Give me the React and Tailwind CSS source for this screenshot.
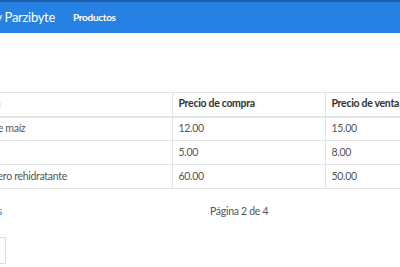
import React from "react";

const productos = [
  { descripcion: "Palomitas de maíz", compra: "12.00", venta: "15.00" },
  { descripcion: "Jabón", compra: "5.00", venta: "8.00" },
  { descripcion: "Polvo de suero rehidratante", compra: "60.00", venta: "50.00" },
];

export default function App() {
  return (
    <div className="min-h-screen w-[400px] overflow-hidden bg-white font-['Lato',sans-serif] text-[10.5px] tracking-[-0.3px] text-[#555]">
      <nav className="flex h-[33px] items-center border-t-2 border-[#1f5fa8] bg-[#2780e3] text-white">
        <div className="flex w-[55px] justify-end overflow-hidden whitespace-nowrap">
          <span className="text-[13px]">Sistema de ventas by Parzibyte</span>
        </div>
        <a className="ml-[18px] text-[10px] font-bold">Productos</a>
      </nav>

      <div className="-ml-[78px] pt-[59px]">
        <table className="w-[700px] table-fixed border-collapse">
          <thead>
            <tr className="h-[24px] border-y border-b-2 border-[#e3e3e3] text-left text-[#333]">
              <th className="w-[250px] border-r border-[#e3e3e3] pl-[26px] font-bold">Descripción</th>
              <th className="w-[153px] border-r border-[#e3e3e3] pl-[6px] font-bold">Precio de compra</th>
              <th className="w-[150px] border-r border-[#e3e3e3] pl-[6px] font-bold">Precio de venta</th>
              <th className="pl-[6px] font-bold">Existencia</th>
            </tr>
          </thead>
          <tbody>
            {productos.map((p) => (
              <tr key={p.descripcion} className="h-[24px] border-b border-[#e3e3e3]">
                <td className="border-r border-[#e3e3e3] pl-[26px] whitespace-nowrap">{p.descripcion}</td>
                <td className="border-r border-[#e3e3e3] pl-[6px]">{p.compra}</td>
                <td className="border-r border-[#e3e3e3] pl-[6px]">{p.venta}</td>
                <td className="pl-[6px]">10</td>
              </tr>
            ))}
          </tbody>
        </table>

        <div className="flex items-center pt-[15px]">
          <a className="w-[80px] text-right text-[#2780e3]">Anteriores</a>
          <span className="ml-[208px]">Página 2 de 4</span>
        </div>

        <div className="pt-[17px]">
          <button className="h-[27px] w-[84px] border border-[#ddd] bg-white" />
        </div>
      </div>
    </div>
  );
}
